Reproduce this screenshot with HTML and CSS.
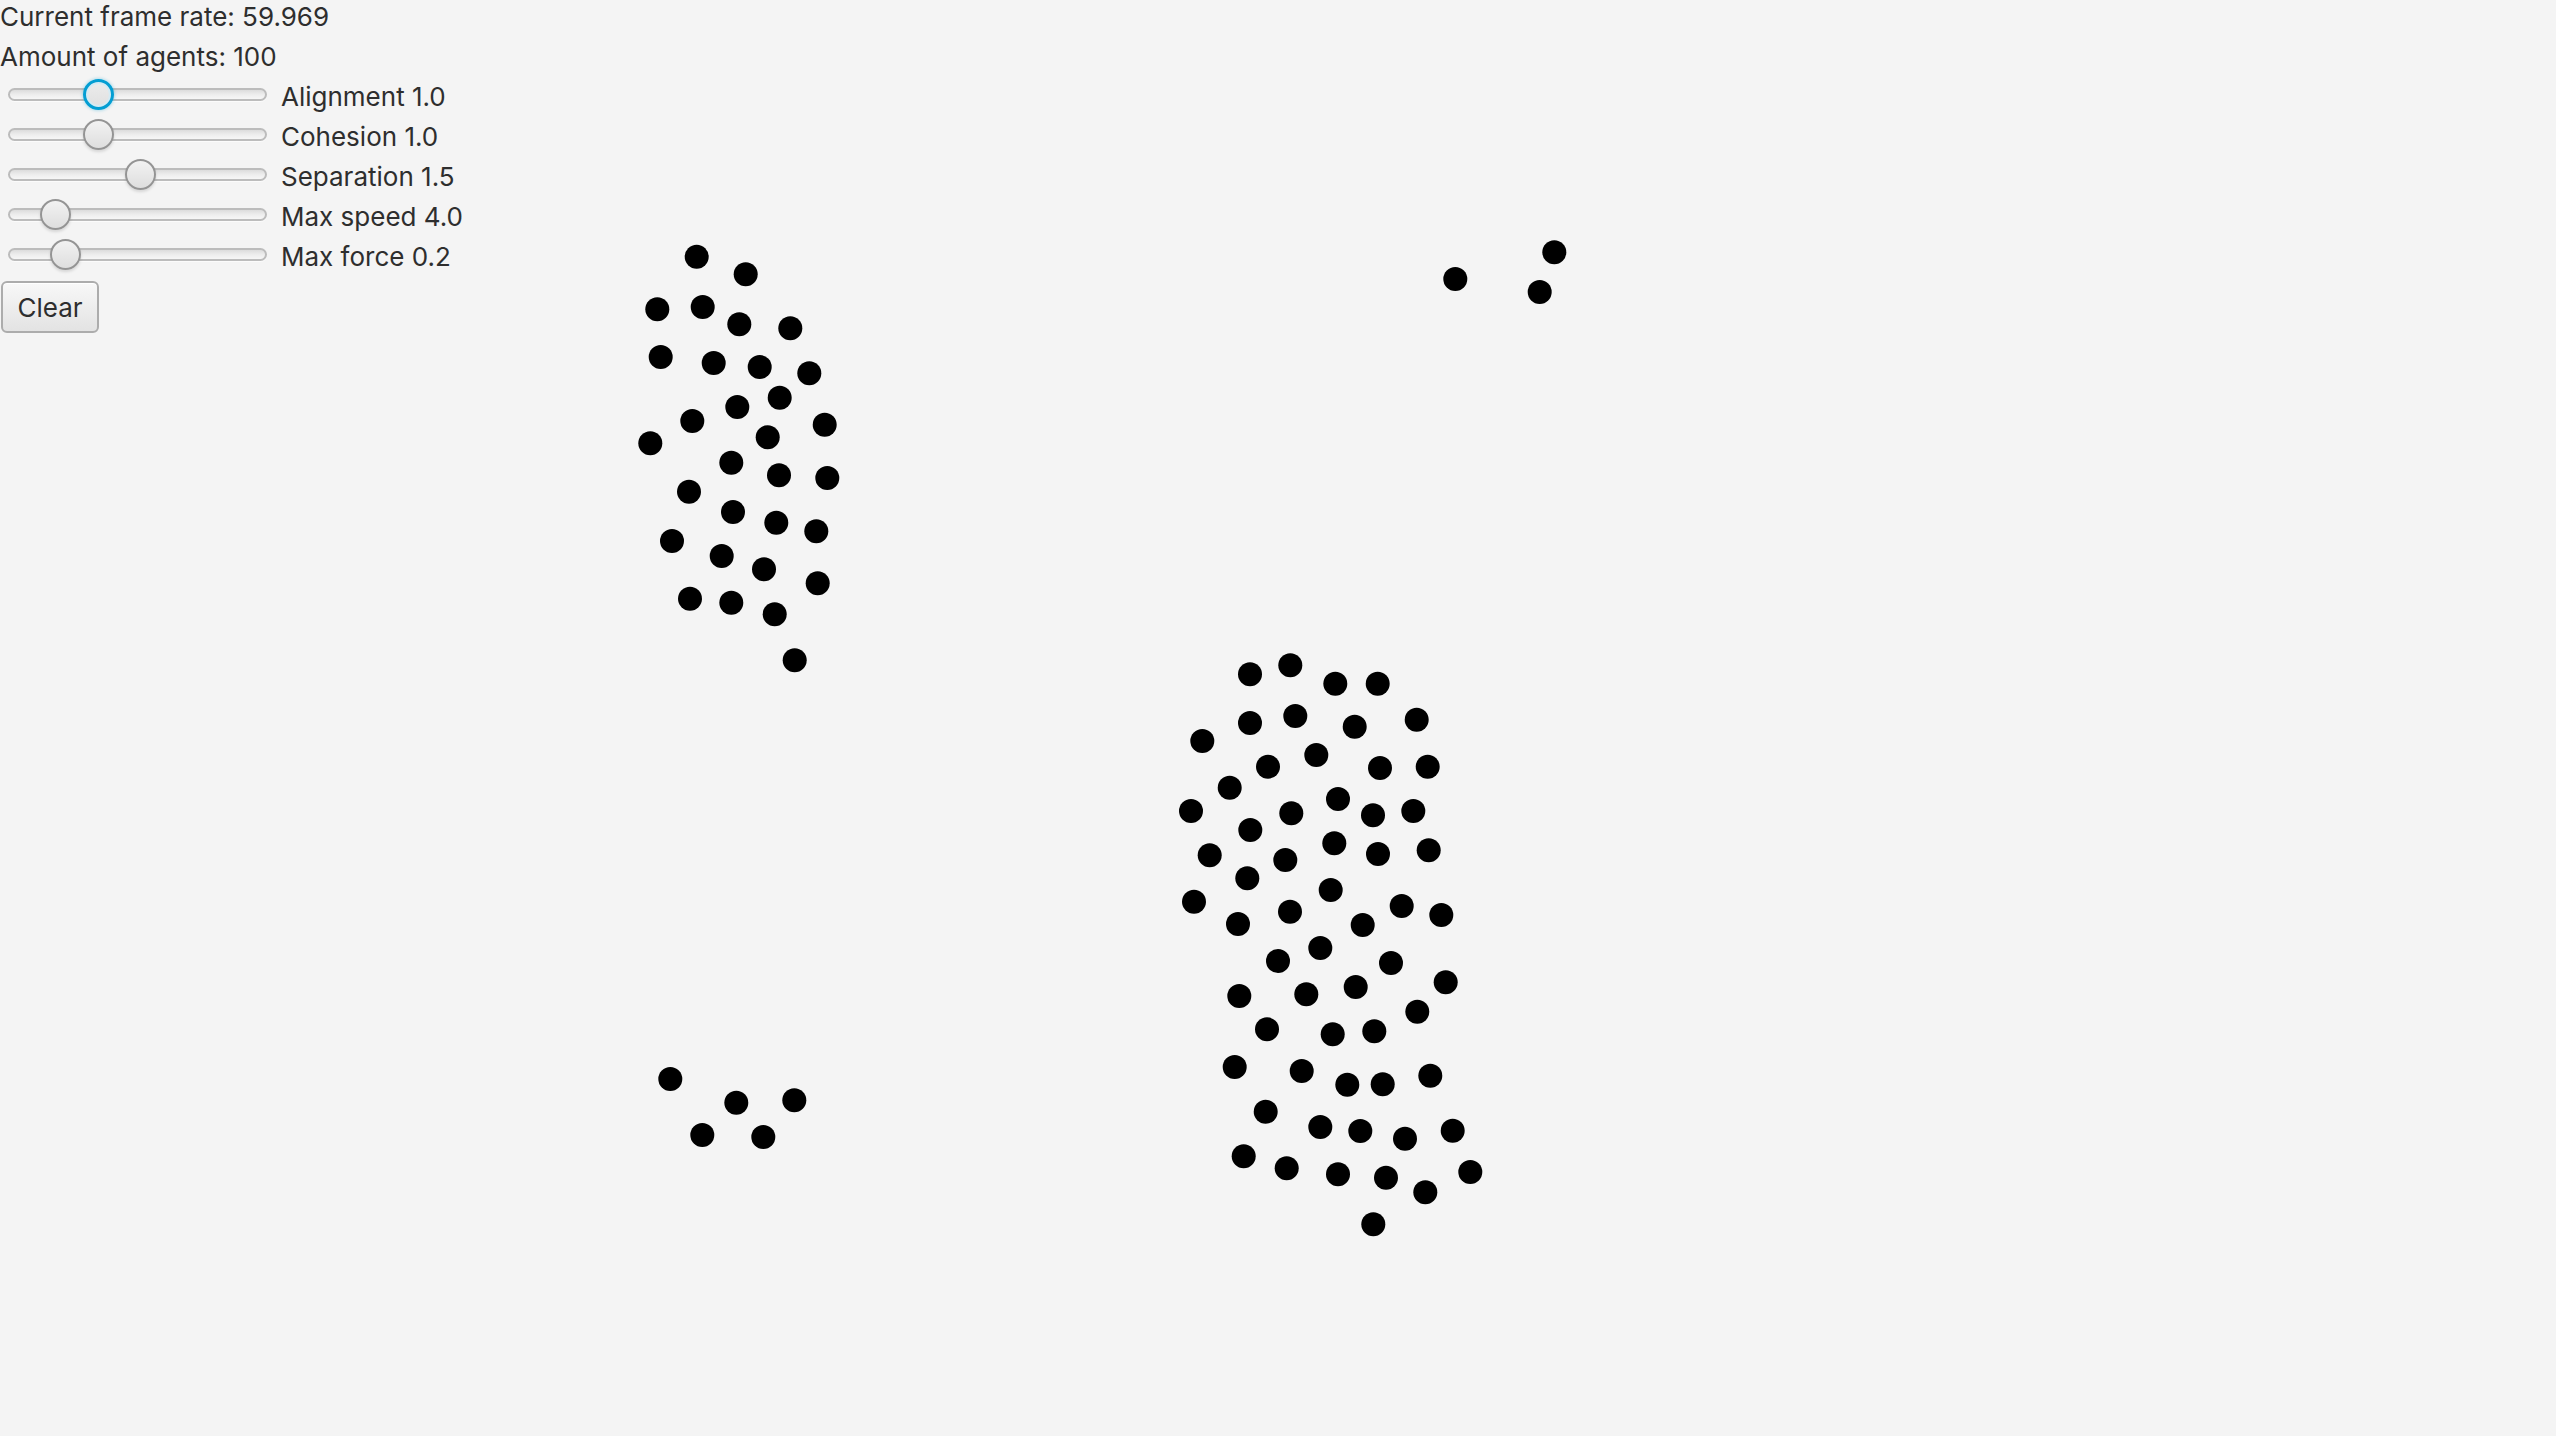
FILE: index.html
```html
<!DOCTYPE html>
<html lang="en">
<head>
<meta charset="utf-8">
<title>Flocking</title>
<link rel="stylesheet" href="styles.css">
</head>
<body>
<div class="app">
  <div class="panel">
    <div class="line">Current frame rate: 59.969</div>
    <div class="line">Amount of agents: 100</div>
    <div class="slider-row">
      <div class="slider"><div class="track"></div><div class="thumb focused" style="left:90px"></div></div>
      <span class="label">Alignment 1.0</span>
    </div>
    <div class="slider-row">
      <div class="slider"><div class="track"></div><div class="thumb" style="left:90px"></div></div>
      <span class="label">Cohesion 1.0</span>
    </div>
    <div class="slider-row">
      <div class="slider"><div class="track"></div><div class="thumb" style="left:132px"></div></div>
      <span class="label">Separation 1.5</span>
    </div>
    <div class="slider-row">
      <div class="slider"><div class="track"></div><div class="thumb" style="left:47px"></div></div>
      <span class="label">Max speed 4.0</span>
    </div>
    <div class="slider-row">
      <div class="slider"><div class="track"></div><div class="thumb" style="left:57px"></div></div>
      <span class="label">Max force 0.2</span>
    </div>
    <button class="btn">Clear</button>
  </div>
  <svg class="world" width="2556" height="1436" viewBox="0 0 2556 1436" xmlns="http://www.w3.org/2000/svg">
    <g class="agents">
      <circle cx="696.7" cy="256.7" r="12"/>
      <circle cx="745.7" cy="274.3" r="12"/>
      <circle cx="657.3" cy="309.3" r="12"/>
      <circle cx="702.7" cy="307" r="12"/>
      <circle cx="739.3" cy="324.3" r="12"/>
      <circle cx="790.3" cy="328.3" r="12"/>
      <circle cx="660.7" cy="357" r="12"/>
      <circle cx="713.7" cy="363" r="12"/>
      <circle cx="759.7" cy="367" r="12"/>
      <circle cx="809.3" cy="373.3" r="12"/>
      <circle cx="779.7" cy="397.7" r="12"/>
      <circle cx="737.3" cy="407" r="12"/>
      <circle cx="692.3" cy="421" r="12"/>
      <circle cx="824.7" cy="424.7" r="12"/>
      <circle cx="650.3" cy="443.3" r="12"/>
      <circle cx="767.7" cy="437.3" r="12"/>
      <circle cx="731.3" cy="462.7" r="12"/>
      <circle cx="779" cy="475.3" r="12"/>
      <circle cx="827.3" cy="478" r="12"/>
      <circle cx="689" cy="491.7" r="12"/>
      <circle cx="733" cy="512" r="12"/>
      <circle cx="776.3" cy="522.7" r="12"/>
      <circle cx="816.3" cy="531.3" r="12"/>
      <circle cx="672" cy="541" r="12"/>
      <circle cx="721.7" cy="556" r="12"/>
      <circle cx="764" cy="569.3" r="12"/>
      <circle cx="817.7" cy="583.3" r="12"/>
      <circle cx="690" cy="598.7" r="12"/>
      <circle cx="731.3" cy="602.7" r="12"/>
      <circle cx="774.7" cy="614.3" r="12"/>
      <circle cx="794.7" cy="660.3" r="12"/>

      <circle cx="1554.3" cy="252.3" r="12"/>
      <circle cx="1455.3" cy="279" r="12"/>
      <circle cx="1539.7" cy="292" r="12"/>

      <circle cx="670.3" cy="1079" r="12"/>
      <circle cx="736.3" cy="1102.7" r="12"/>
      <circle cx="794.3" cy="1100.3" r="12"/>
      <circle cx="702.3" cy="1135" r="12"/>
      <circle cx="763.3" cy="1137" r="12"/>

      <circle cx="1250" cy="674.3" r="12"/>
      <circle cx="1290.3" cy="665.3" r="12"/>
      <circle cx="1335.3" cy="683.7" r="12"/>
      <circle cx="1377.7" cy="683.7" r="12"/>
      <circle cx="1250" cy="723" r="12"/>
      <circle cx="1295.3" cy="716" r="12"/>
      <circle cx="1354.7" cy="726.7" r="12"/>
      <circle cx="1416.7" cy="719.7" r="12"/>
      <circle cx="1202.3" cy="741" r="12"/>
      <circle cx="1268" cy="766.7" r="12"/>
      <circle cx="1316.3" cy="755" r="12"/>
      <circle cx="1380" cy="768" r="12"/>
      <circle cx="1427.7" cy="766.7" r="12"/>
      <circle cx="1229.7" cy="787.7" r="12"/>
      <circle cx="1191" cy="811" r="12"/>
      <circle cx="1291.3" cy="813.3" r="12"/>
      <circle cx="1338" cy="799" r="12"/>
      <circle cx="1373" cy="815.3" r="12"/>
      <circle cx="1413.3" cy="811" r="12"/>
      <circle cx="1250.3" cy="830" r="12"/>
      <circle cx="1209.7" cy="855.3" r="12"/>
      <circle cx="1285.3" cy="860" r="12"/>
      <circle cx="1334.3" cy="843.3" r="12"/>
      <circle cx="1378" cy="854" r="12"/>
      <circle cx="1428.7" cy="850.3" r="12"/>
      <circle cx="1247.3" cy="878.3" r="12"/>
      <circle cx="1194" cy="901.7" r="12"/>
      <circle cx="1238" cy="924" r="12"/>
      <circle cx="1290" cy="911.7" r="12"/>
      <circle cx="1330.7" cy="890" r="12"/>
      <circle cx="1362.7" cy="925" r="12"/>
      <circle cx="1401.7" cy="906" r="12"/>
      <circle cx="1441.3" cy="915" r="12"/>
      <circle cx="1278" cy="961" r="12"/>
      <circle cx="1320.3" cy="948" r="12"/>
      <circle cx="1391" cy="963" r="12"/>
      <circle cx="1445.7" cy="982.3" r="12"/>
      <circle cx="1239.3" cy="996" r="12"/>
      <circle cx="1306.3" cy="994.3" r="12"/>
      <circle cx="1355.7" cy="987" r="12"/>
      <circle cx="1417.3" cy="1011.7" r="12"/>
      <circle cx="1267" cy="1029.3" r="12"/>
      <circle cx="1332.7" cy="1034.3" r="12"/>
      <circle cx="1374.3" cy="1031.3" r="12"/>
      <circle cx="1234.7" cy="1067" r="12"/>
      <circle cx="1301.7" cy="1071" r="12"/>
      <circle cx="1347.3" cy="1084.7" r="12"/>
      <circle cx="1382.7" cy="1084.3" r="12"/>
      <circle cx="1430.3" cy="1075.7" r="12"/>
      <circle cx="1265.7" cy="1111.7" r="12"/>
      <circle cx="1320.3" cy="1127" r="12"/>
      <circle cx="1360.3" cy="1131" r="12"/>
      <circle cx="1405" cy="1138.7" r="12"/>
      <circle cx="1452.7" cy="1130.7" r="12"/>
      <circle cx="1243.7" cy="1156.3" r="12"/>
      <circle cx="1286.7" cy="1168.3" r="12"/>
      <circle cx="1338" cy="1174.3" r="12"/>
      <circle cx="1386" cy="1177.7" r="12"/>
      <circle cx="1425.3" cy="1192.3" r="12"/>
      <circle cx="1470.3" cy="1172" r="12"/>
      <circle cx="1373.3" cy="1224.3" r="12"/>
    </g>
  </svg>
</div>
</body>
</html>
```
FILE: styles.css
```css
html, body {
  margin: 0;
  padding: 0;
  height: 100%;
  overflow: hidden;
  background: #f4f4f4;
}

.app {
  position: relative;
  width: 100%;
  height: 100%;
  font-family: Inter, "Liberation Sans", sans-serif;
  font-size: 26px;
  color: #2e2e2e;
}

.panel {
  position: relative;
  z-index: 1;
  display: flex;
  flex-direction: column;
  align-items: flex-start;
  gap: 8px;
}

.line {
  height: 32px;
  line-height: 34px;
  white-space: nowrap;
}

.slider-row {
  display: flex;
  align-items: center;
  height: 32px;
  padding-left: 8px;
}

.slider {
  position: relative;
  width: 259px;
  height: 32px;
  margin-right: 14px;
}

.track {
  position: absolute;
  left: 0;
  right: 0;
  top: 8px;
  height: 9px;
  border: 2px solid #bcbcbc;
  border-radius: 8px;
  background: linear-gradient(#dcdcdc, #eeeeee 55%, #f6f6f6);
  box-shadow: 0 1px 0 #fbfbfb;
}

.thumb {
  position: absolute;
  top: -1px;
  width: 27px;
  height: 27px;
  margin-left: -15px;
  border: 2px solid #949494;
  border-radius: 50%;
  background: linear-gradient(#f2f2f2, #dedede);
  box-shadow: 0 2px 3px rgba(0, 0, 0, 0.12);
}

.thumb.focused {
  border: 3px solid #039ed3;
  width: 25px;
  height: 25px;
  background: linear-gradient(#ececec, #e0e0e0);
  box-shadow: inset 0 0 0 2px #d4ebf4, 0 0 3px 1px rgba(3, 158, 211, 0.25);
}

.label {
  line-height: 34px;
  height: 32px;
  white-space: nowrap;
}

.btn {
  margin-top: 1px;
  margin-left: 1px;
  height: 52px;
  width: 98px;
  padding: 0;
  font-family: inherit;
  font-size: 26px;
  color: #2e2e2e;
  border: 2px solid #acacac;
  border-radius: 6px;
  background: linear-gradient(#f8f8f8, #e3e3e3);
  box-shadow: inset 0 1px 0 #ffffff;
}

.world {
  position: absolute;
  left: 0;
  top: 0;
  z-index: 0;
}

.agents circle {
  fill: #000000;
}
```
